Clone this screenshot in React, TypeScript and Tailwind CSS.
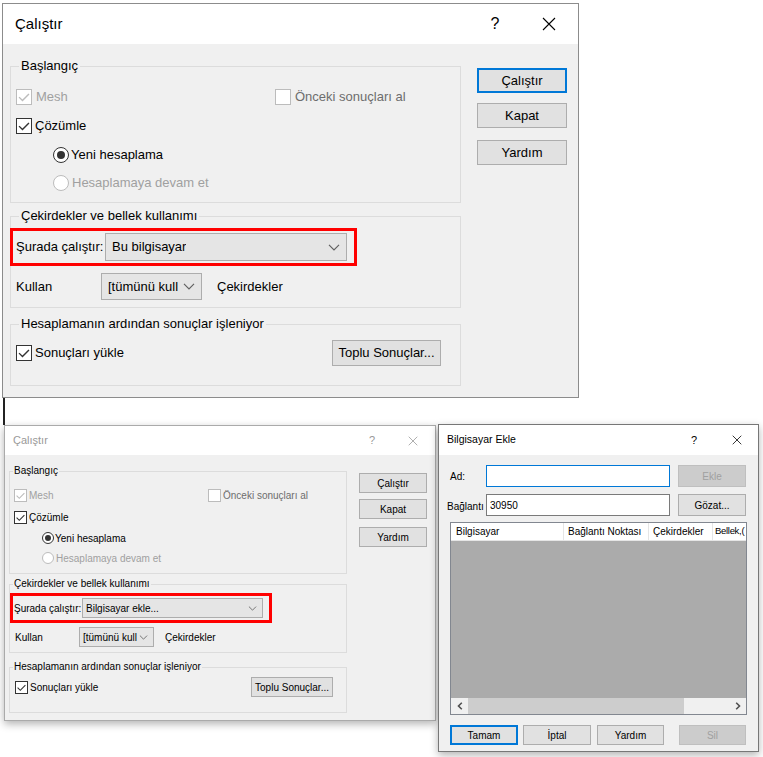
import React from "react";

type Sz = { big?: boolean };

function Check({ big, checked, disabled }: Sz & { checked?: boolean; disabled?: boolean }) {
  const stroke = disabled ? "#bcbcbc" : "#333333";
  return (
    <span
      className={`${big ? "w-[16px] h-[16px]" : "w-[13px] h-[13px]"} border ${
        disabled ? "border-[#bcbcbc]" : "border-[#333333]"
      } bg-white flex items-center justify-center shrink-0`}
    >
      {checked && (
        <svg viewBox="0 0 11 11" className="w-full h-full">
          <path d="M1.6 5.6l2.7 2.7L9.4 3.1" fill="none" stroke={stroke} strokeWidth="1.1" />
        </svg>
      )}
    </span>
  );
}

function Radio({ big, checked, disabled }: Sz & { checked?: boolean; disabled?: boolean }) {
  return (
    <span
      className={`${big ? "w-[16px] h-[16px]" : "w-[12px] h-[12px]"} rounded-full border ${
        disabled ? "border-[#bcbcbc]" : "border-[#333333]"
      } bg-white flex items-center justify-center shrink-0`}
    >
      {checked && <span className={`${big ? "w-[8px] h-[8px]" : "w-[6px] h-[6px]"} rounded-full bg-[#333333]`} />}
    </span>
  );
}

function Chevron({ big }: Sz) {
  return (
    <svg viewBox="0 0 10 6" className={big ? "w-[12px] h-[7px]" : "w-[9px] h-[5px]"}>
      <polyline points="0.7,0.7 5,5 9.3,0.7" fill="none" stroke="#606060" strokeWidth="1" />
    </svg>
  );
}

function XIcon({ className, color = "#000" }: { className: string; color?: string }) {
  return (
    <svg viewBox="0 0 14 14" className={className}>
      <path d="M1 1L13 13M13 1L1 13" stroke={color} strokeWidth="1.1" fill="none" />
    </svg>
  );
}

function Btn({
  children,
  className = "",
  focus,
  disabled,
}: {
  children: React.ReactNode;
  className?: string;
  focus?: boolean;
  disabled?: boolean;
}) {
  const skin = disabled
    ? "bg-[#cccccc] border border-[#bfbfbf] text-[#a0a0a0]"
    : focus
    ? "bg-[#e1e1e1] border-2 border-[#0078d7]"
    : "bg-[#e1e1e1] border border-[#adadad]";
  return <div className={`flex items-center justify-center shrink-0 ${skin} ${className}`}>{children}</div>;
}

function Combo({ big, text, className }: Sz & { text: string; className: string }) {
  return (
    <div
      className={`flex items-center justify-between bg-[#e5e5e5] border border-[#adadad] shrink-0 ${
        big ? "pl-[6px] pr-[6px]" : "pl-[3px] pr-[5px]"
      } ${className}`}
    >
      <span className="whitespace-nowrap overflow-hidden">{text}</span>
      <Chevron big={big} />
    </div>
  );
}

function RunDialogBig() {
  return (
    <div className="absolute left-[2px] top-[3px] w-[577px] h-[395px] border border-[#8c8c8c] bg-[#f0f0f0] flex flex-col text-[13px] text-black">
      <div className="h-[40px] bg-white flex items-center justify-between pl-[12px] shrink-0">
        <span className="text-[15px]">Çalıştır</span>
        <div className="flex items-center gap-[37px] pr-[22px]">
          <span className="w-[20px] text-center text-[16px]">?</span>
          <XIcon className="w-[14px] h-[14px]" />
        </div>
      </div>

      <div className="flex pl-[7px] pt-[15px]">
        <div className="w-[451px] flex flex-col">
          <fieldset className="h-[144px] border border-[#dcdcdc]">
            <legend className="ml-[8px] px-[2px] leading-[14px]">Başlangıç</legend>
            <div className="pt-[9px] pl-[5px] flex flex-col">
              <div className="h-[29px] flex items-center">
                <div className="w-[259px] flex items-center gap-[4px] text-[#a0a0a0]">
                  <Check big checked disabled />
                  Mesh
                </div>
                <div className="flex items-center gap-[4px] text-[#6d6d6d]">
                  <Check big disabled />
                  Önceki sonuçları al
                </div>
              </div>
              <div className="h-[29px] flex items-center gap-[3px]">
                <Check big checked />
                Çözümle
              </div>
              <div className="h-[29px] flex items-center gap-[2px] pl-[37px]">
                <Radio big checked />
                Yeni hesaplama
              </div>
              <div className="h-[28px] flex items-center gap-[3px] pl-[37px] text-[#a0a0a0]">
                <Radio big disabled />
                Hesaplamaya devam et
              </div>
            </div>
          </fieldset>

          <fieldset className="mt-[6px] h-[99px] border border-[#dcdcdc]">
            <legend className="ml-[8px] px-[2px] leading-[14px]">Çekirdekler ve bellek kullanımı</legend>
            <div className="flex flex-col">
              <div className="-ml-[1px] mt-[5px] h-[38px] w-[347px] border-[3px] border-[#ff0000] flex items-center pl-[3px]">
                <span className="whitespace-nowrap">Şurada çalıştır:</span>
                <Combo big text="Bu bilgisayar" className="ml-auto mr-[7px] w-[242px] h-[28px]" />
              </div>
              <div className="mt-[7px] h-[27px] flex items-center pl-[5px]">
                <span className="w-[85px]">Kullan</span>
                <Combo big text="[tümünü kull" className="w-[101px] h-[27px]" />
                <span className="ml-[15px]">Çekirdekler</span>
              </div>
            </div>
          </fieldset>

          <fieldset className="mt-[9px] h-[69px] border border-[#dcdcdc]">
            <legend className="ml-[8px] px-[2px] leading-[14px]">Hesaplamanın ardından sonuçlar işleniyor</legend>
            <div className="mt-[9px] h-[26px] flex items-center justify-between pl-[5px] pr-[19px]">
              <div className="flex items-center gap-[3px]">
                <Check big checked />
                Sonuçları yükle
              </div>
              <Btn className="w-[109px] h-[26px]">Toplu Sonuçlar...</Btn>
            </div>
          </fieldset>
        </div>

        <div className="ml-[16px] pt-[9px] flex flex-col">
          <Btn focus className="w-[90px] h-[25px]">
            Çalıştır
          </Btn>
          <Btn className="mt-[10px] w-[90px] h-[25px]">Kapat</Btn>
          <Btn className="mt-[12px] w-[90px] h-[25px]">Yardım</Btn>
        </div>
      </div>
    </div>
  );
}

function RunDialogSmall() {
  return (
    <div className="absolute left-[4px] top-[425px] w-[432px] h-[296px] border border-[#aaaaaa] bg-[#f0f0f0] flex flex-col text-[10px] text-black shadow-[0_3px_8px_rgba(0,0,0,0.3)]">
      <div className="h-[29px] bg-white flex items-center justify-between pl-[8px] shrink-0">
        <span className="text-[11px] text-[#999999]">Çalıştır</span>
        <div className="flex items-center gap-[30px] pr-[17px] text-[#999999]">
          <span className="w-[12px] text-center text-[11px]">?</span>
          <XIcon className="w-[10px] h-[10px]" color="#999999" />
        </div>
      </div>

      <div className="flex pl-[4px] pt-[10px]">
        <div className="w-[338px] flex flex-col">
          <fieldset className="h-[109px] border border-[#dcdcdc]">
            <legend className="ml-[3px] px-[1px] leading-[12px]">Başlangıç</legend>
            <div className="pt-[7px] pl-[4px] flex flex-col">
              <div className="h-[22px] flex items-center">
                <div className="w-[194px] flex items-center gap-[2px] text-[#a0a0a0]">
                  <Check checked disabled />
                  Mesh
                </div>
                <div className="flex items-center gap-[2px] text-[#6d6d6d]">
                  <Check disabled />
                  Önceki sonuçları al
                </div>
              </div>
              <div className="h-[22px] flex items-center gap-[2px]">
                <Check checked />
                Çözümle
              </div>
              <div className="h-[20px] flex items-center gap-[1px] pl-[28px]">
                <Radio checked />
                Yeni hesaplama
              </div>
              <div className="h-[20px] flex items-center gap-[2px] pl-[28px] text-[#a0a0a0]">
                <Radio disabled />
                Hesaplamaya devam et
              </div>
            </div>
          </fieldset>

          <fieldset className="mt-[4px] h-[75px] border border-[#dcdcdc]">
            <legend className="ml-[3px] px-[1px] leading-[12px]">Çekirdekler ve bellek kullanımı</legend>
            <div className="flex flex-col">
              <div className="mt-[3px] h-[30px] w-[262px] border-[3px] border-[#ff0000] flex items-center pl-[1px]">
                <span className="whitespace-nowrap">Şurada çalıştır:</span>
                <Combo text="Bilgisayar ekle..." className="ml-auto mr-[6px] w-[181px] h-[20px]" />
              </div>
              <div className="mt-[4px] h-[20px] flex items-center pl-[5px]">
                <span className="w-[64px]">Kullan</span>
                <Combo text="[tümünü kull" className="w-[75px] h-[20px]" />
                <span className="ml-[11px]">Çekirdekler</span>
              </div>
            </div>
          </fieldset>

          <fieldset className="mt-[8px] h-[52px] border border-[#dcdcdc]">
            <legend className="ml-[3px] px-[1px] leading-[12px]">Hesaplamanın ardından sonuçlar işleniyor</legend>
            <div className="mt-[4px] h-[20px] flex items-center justify-between pl-[5px] pr-[13px]">
              <div className="flex items-center gap-[2px]">
                <Check checked />
                Sonuçları yükle
              </div>
              <Btn className="w-[82px] h-[20px]">Toplu Sonuçlar...</Btn>
            </div>
          </fieldset>
        </div>

        <div className="ml-[12px] pt-[8px] flex flex-col">
          <Btn className="w-[68px] h-[20px]">Çalıştır</Btn>
          <Btn className="mt-[6px] w-[68px] h-[20px]">Kapat</Btn>
          <Btn className="mt-[8px] w-[68px] h-[20px]">Yardım</Btn>
        </div>
      </div>
    </div>
  );
}

function ArrowGlyph({ dir }: { dir: "left" | "right" }) {
  return (
    <svg viewBox="0 0 6 8" className="w-[6px] h-[8px]">
      <polyline
        points={dir === "left" ? "4.8,0.8 1.5,4 4.8,7.2" : "1.2,0.8 4.5,4 1.2,7.2"}
        fill="none"
        stroke="#505050"
        strokeWidth="1.6"
      />
    </svg>
  );
}

function AddComputerDialog() {
  return (
    <div className="absolute left-[438px] top-[424px] w-[321px] h-[328px] border border-[#777777] bg-[#f0f0f0] flex flex-col text-[10px] text-black shadow-[0_3px_8px_rgba(0,0,0,0.3)]">
      <div className="h-[30px] bg-white flex items-center justify-between pl-[8px] shrink-0">
        <span className="text-[10.5px]">Bilgisayar Ekle</span>
        <div className="flex items-center gap-[32px] pr-[16px]">
          <span className="w-[12px] text-center text-[11px]">?</span>
          <XIcon className="w-[10px] h-[10px]" />
        </div>
      </div>

      <div className="flex flex-col">
        <div className="mt-[10px] h-[22px] flex items-center">
          <span className="w-[47px] pl-[11px]">Ad:</span>
          <div className="w-[184px] h-[22px] bg-white border border-[#0078d7]" />
          <Btn disabled className="ml-[8px] w-[68px] h-[22px]">
            Ekle
          </Btn>
        </div>
        <div className="mt-[7px] h-[22px] flex items-center">
          <span className="w-[47px] pl-[8px] pt-[2px]">Bağlantı</span>
          <div className="w-[184px] h-[22px] bg-white border border-[#7a7a7a] flex items-center pl-[3px]">30950</div>
          <Btn className="ml-[8px] w-[68px] h-[22px]">Gözat...</Btn>
        </div>

        <div className="mt-[6px] ml-[11px] w-[297px] h-[193px] border border-[#828790] flex flex-col">
          <div className="h-[18px] bg-white flex border-b border-[#e5e5e5] shrink-0 overflow-hidden">
            <div className="w-[113px] shrink-0 border-r border-[#e5e5e5] pl-[5px] flex items-center">Bilgisayar</div>
            <div className="w-[85px] shrink-0 border-r border-[#e5e5e5] pl-[4px] flex items-center whitespace-nowrap">
              Bağlantı Noktası
            </div>
            <div className="w-[64px] shrink-0 border-r border-[#e5e5e5] pl-[4px] flex items-center">Çekirdekler</div>
            <div className="flex-1 pl-[2px] flex items-center whitespace-nowrap text-[9.5px] tracking-[-0.3px]">
              Bellek,(
            </div>
          </div>
          <div className="flex-1 bg-[#ababab]" />
          <div className="h-[16px] flex shrink-0 bg-[#f0f0f0] pl-[1px]">
            <div className="w-[16px] flex items-center justify-center">
              <ArrowGlyph dir="left" />
            </div>
            <div className="w-[216px] bg-[#cdcdcd]" />
            <div className="flex-1" />
            <div className="w-[16px] flex items-center justify-center">
              <ArrowGlyph dir="right" />
            </div>
          </div>
        </div>

        <div className="mt-[10px] ml-[11px] flex">
          <Btn focus className="w-[68px] h-[20px]">
            Tamam
          </Btn>
          <Btn className="ml-[5px] w-[68px] h-[20px]">İptal</Btn>
          <Btn className="ml-[6px] w-[67px] h-[20px]">Yardım</Btn>
          <Btn disabled className="ml-[15px] w-[67px] h-[20px]">
            Sil
          </Btn>
        </div>
      </div>
    </div>
  );
}

export default function App() {
  return (
    <div className="relative w-[763px] h-[757px] bg-white overflow-hidden [font-family:'Liberation_Sans',Arial,sans-serif]">
      <RunDialogBig />
      <div className="absolute left-[3px] top-[398px] w-[2px] h-[27px] bg-[#222222]" />
      <RunDialogSmall />
      <AddComputerDialog />
    </div>
  );
}
